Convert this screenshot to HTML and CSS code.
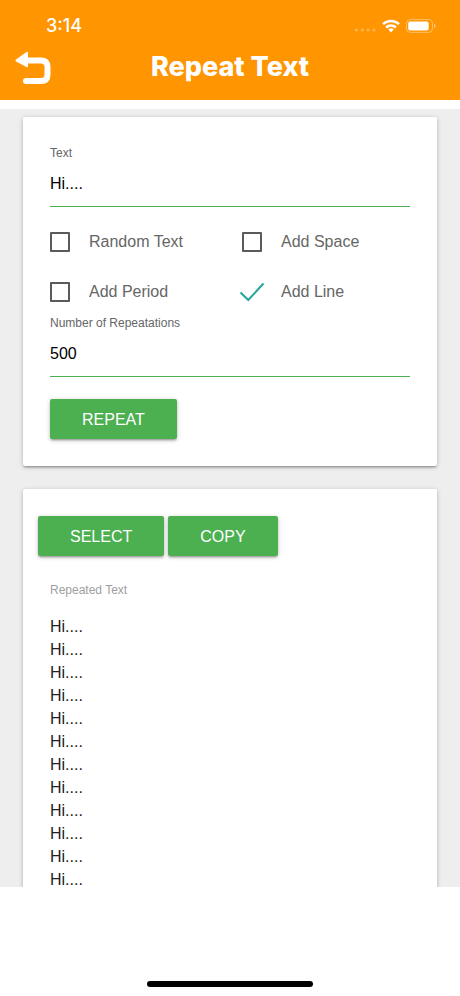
FILE: index.html
```html
<!DOCTYPE html>
<html lang="en">
<head>
<meta charset="utf-8">
<meta name="viewport" content="width=device-width, initial-scale=1">
<title>Repeat Text</title>
<link rel="stylesheet" href="styles.css">
</head>
<body>
<header class="header">
  <div class="status">
    <span class="time">3:14</span>
    <svg class="dots" width="22" height="14" viewBox="0 0 22 14" aria-hidden="true">
      <g fill="#fff" fill-opacity=".3"><circle cx="2.500" cy="11" r="1.600"/><circle cx="8.300" cy="11" r="1.600"/><circle cx="14.100" cy="11" r="1.600"/><circle cx="19.900" cy="11" r="1.600"/></g>
    </svg>
    <svg class="wifi" width="18" height="14" viewBox="0 0 18 14" aria-hidden="true">
      <g fill="none" stroke="#fff" stroke-width="2.500"><path d="M1 5.200a11.400 11.400 0 0 1 16 0"/><path d="M4.100 8.500a7 7 0 0 1 9.800 0"/></g>
      <path d="M6.300 10.500a3.900 3.900 0 0 1 5.400 0L9 13.500z" fill="#fff"/>
    </svg>
    <svg class="battery" width="30" height="14" viewBox="0 0 30 14" aria-hidden="true">
      <rect x=".5" y=".6" width="26" height="12.800" rx="3.800" fill="none" stroke="#fff" stroke-opacity=".4"/>
      <rect x="2.200" y="2.400" width="20.500" height="9.200" rx="2" fill="#fff"/>
      <path d="M28 4.800c2 .7 2 3.700 0 4.400z" fill="#fff" fill-opacity=".5"/>
    </svg>
  </div>
  <div class="titlebar">
    <button class="back" type="button" aria-label="Back">
      <svg width="38" height="38" viewBox="0 0 38 38" aria-hidden="true">
        <path d="M12 12.500H27Q33.500 12.500 33.500 19V26.500Q33.500 33 27 33H12" fill="none" stroke="#fff" stroke-width="6" stroke-linecap="round" stroke-linejoin="round"/>
        <path d="M2 11.500 12.500 4Q14 3 14 4.800V18.200Q14 20 12.500 19L2 13.500Q.7 12.500 2 11.500z" fill="#fff"/>
      </svg>
    </button>
    <h1 class="title">Repeat Text</h1>
  </div>
</header>
<main class="content">
  <form class="card form">
    <label class="caption" for="text">Text</label>
    <input class="field" id="text" type="text" value="Hi....">
    <div class="options">
      <label class="option"><input class="box" type="checkbox">Random Text</label>
      <label class="option"><input class="box" type="checkbox">Add Space</label>
      <label class="option"><input class="box" type="checkbox">Add Period</label>
      <label class="option"><input class="box" type="checkbox" checked><svg class="tick" width="26" height="20" viewBox="0 0 26 20" aria-hidden="true"><path d="M1.500 10.500 9.300 18 24.500 1.500" fill="none" stroke="#26a69a" stroke-width="2"/></svg>Add Line</label>
    </div>
    <label class="caption" for="count">Number of Repeatations</label>
    <input class="field" id="count" type="text" inputmode="numeric" value="500">
    <button class="btn repeat" type="button">REPEAT</button>
  </form>
  <section class="card result">
    <div class="actions">
      <button class="btn" type="button">SELECT</button>
      <button class="btn" type="button">COPY</button>
    </div>
    <div class="output">
      <label class="caption muted" for="repeated">Repeated Text</label>
      <textarea class="repeated" id="repeated" rows="14">Hi....
Hi....
Hi....
Hi....
Hi....
Hi....
Hi....
Hi....
Hi....
Hi....
Hi....
Hi....
Hi....
Hi....</textarea>
    </div>
  </section>
</main>
<footer class="footer"><div class="home"></div></footer>
</body>
</html>
```
FILE: styles.css
```css
* { box-sizing: border-box; }

body {
  margin: 0;
  height: 100vh;
  display: flex;
  flex-direction: column;
  background: #fff;
  color: #000;
  font: 16px/24px "Liberation Sans", Arial, sans-serif;
}

button, input, textarea { font: inherit; }
svg { display: block; }

.header {
  flex: none;
  padding: 12px 0 6px;
  margin-bottom: 9px;
  background: #ff9500;
  color: #fff;
  font-family: Inter, sans-serif;
}

.status {
  display: flex;
  align-items: center;
  height: 28px;
  padding: 0 24px 0 46px;
}
.time { flex: 1; font-size: 18px; font-weight: 500; }
.wifi { margin: 0 6px; }

.titlebar {
  display: grid;
  grid-template-columns: 1fr auto 1fr;
  align-items: center;
  height: 54px;
  padding: 0 14px;
}
.back {
  justify-self: start;
  padding: 0;
  border: 0;
  background: none;
}
.title { margin: 0; font-size: 27px; line-height: 32px; font-weight: 800; }

.content {
  flex: 1;
  min-height: 0;
  overflow: hidden;
  padding: 8px 23px 0;
  background: #eee;
}

.card {
  background: #fff;
  border-radius: 2px;
  box-shadow: 0 2px 2px rgba(0, 0, 0, .14), 0 3px 1px -2px rgba(0, 0, 0, .12), 0 1px 5px rgba(0, 0, 0, .2);
}
.form { padding: 28px 27px 27px; margin-bottom: 23px; }

.caption {
  display: block;
  font-size: 12px;
  line-height: 16px;
  color: #666;
}
.muted { color: #9e9e9e; }

.field {
  display: block;
  width: 100%;
  height: 46px;
  padding: 0;
  border: 0;
  border-bottom: 1px solid #4caf50;
  border-radius: 0;
  background: none;
  color: #000;
  outline: 0;
}

.options {
  display: grid;
  grid-template-columns: 1fr 1fr;
  gap: 4px 24px;
  margin-top: 12px;
}
.option {
  position: relative;
  display: flex;
  align-items: center;
  gap: 19px;
  height: 46px;
  color: #666;
}
.box {
  appearance: none;
  flex: none;
  width: 20px;
  height: 20px;
  margin: 0;
  border: 2px solid #5a5a5a;
  border-radius: 1px;
}
.box:checked { border-color: transparent; }
.tick { position: absolute; left: -3px; top: 13px; }

.btn {
  height: 40px;
  padding: 2px 32px 0;
  border: 0;
  border-radius: 2px;
  background: #4caf50;
  color: #fff;
  box-shadow: 0 2px 2px rgba(0, 0, 0, .14), 0 3px 1px -2px rgba(0, 0, 0, .12), 0 1px 5px rgba(0, 0, 0, .2);
}
.repeat { display: block; margin-top: 22px; }

.result { padding: 27px 15px; }
.actions { display: flex; gap: 4px; }
.output { padding: 26px 12px 0; }
.repeated {
  display: block;
  width: 100%;
  padding: 17px 0 0;
  border: 0;
  background: none;
  color: #212121;
  line-height: 23px;
  resize: none;
  overflow: hidden;
  outline: 0;
}

.footer {
  flex: none;
  display: flex;
  align-items: flex-end;
  justify-content: center;
  height: 109px;
  padding-bottom: 9px;
}
.home { width: 36%; height: 6px; border-radius: 3px; background: #000; }
```
